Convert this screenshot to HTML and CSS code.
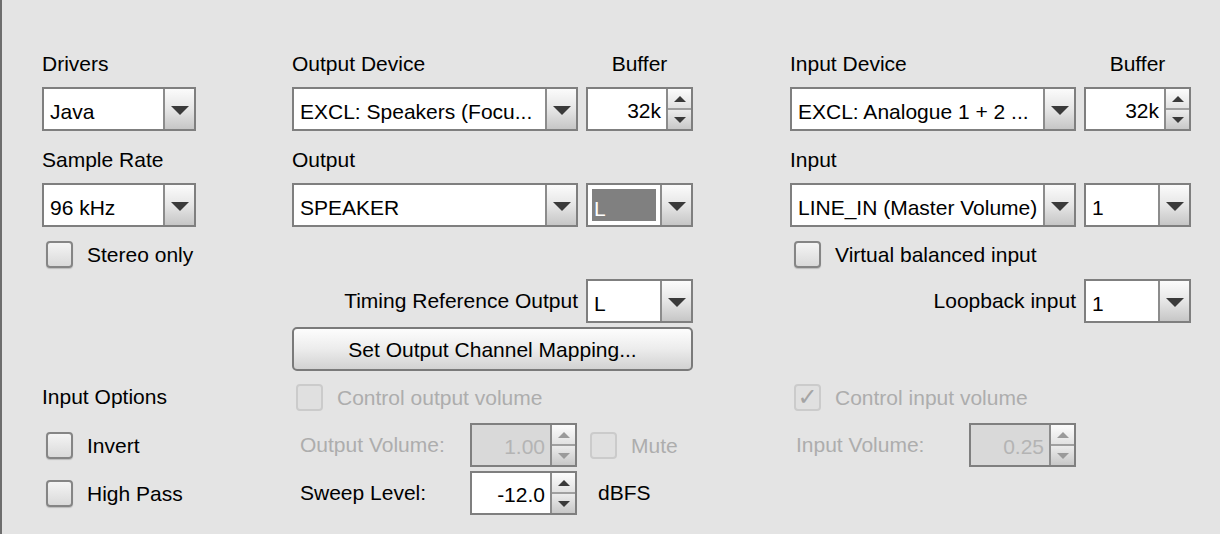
FILE: index.html
```html
<!DOCTYPE html>
<html>
<head>
    <title>Audio Device Settings</title>
    <link rel="stylesheet" href="styles.css">
</head>
<body>
<div class="panel">

    <div class="row row-label">
        <span class="ca">Drivers</span>
        <span class="cb">Output Device</span>
        <span class="cc center">Buffer</span>
        <span class="cd">Input Device</span>
        <span class="ce center">Buffer</span>
    </div>

    <div class="row row-ctrl gap-10">
        <div class="combo ca"><span class="combo-text">Java</span><span class="combo-btn"><i class="arrow-down"></i></span></div>
        <div class="combo cb"><span class="combo-text">EXCL: Speakers (Focu...</span><span class="combo-btn"><i class="arrow-down"></i></span></div>
        <div class="spinner cc"><span class="spin-text">32k</span><span class="spin-btns"><span class="spin-up"><i class="arrow-up-sm"></i></span><span class="spin-down"><i class="arrow-down-sm"></i></span></span></div>
        <div class="combo cd"><span class="combo-text">EXCL: Analogue 1 + 2 ...</span><span class="combo-btn"><i class="arrow-down"></i></span></div>
        <div class="spinner ce"><span class="spin-text">32k</span><span class="spin-btns"><span class="spin-up"><i class="arrow-up-sm"></i></span><span class="spin-down"><i class="arrow-down-sm"></i></span></span></div>
    </div>

    <div class="row row-label gap-16">
        <span class="ca">Sample Rate</span>
        <span class="cb">Output</span>
        <span class="cd">Input</span>
    </div>

    <div class="row row-ctrl gap-10">
        <div class="combo ca"><span class="combo-text">96 kHz</span><span class="combo-btn"><i class="arrow-down"></i></span></div>
        <div class="combo cb"><span class="combo-text">SPEAKER</span><span class="combo-btn"><i class="arrow-down"></i></span></div>
        <div class="combo cc"><span class="combo-text selected-wrap"><span class="selected">L</span></span><span class="combo-btn"><i class="arrow-down"></i></span></div>
        <div class="combo cd"><span class="combo-text">LINE_IN (Master Volume)</span><span class="combo-btn"><i class="arrow-down"></i></span></div>
        <div class="combo ce"><span class="combo-text">1</span><span class="combo-btn"><i class="arrow-down"></i></span></div>
    </div>

    <div class="row row-check gap-12">
        <label class="check ca"><span class="box"></span>Stereo only</label>
        <label class="check cd"><span class="box"></span>Virtual balanced input</label>
    </div>

    <div class="row row-ctrl gap-10">
        <span class="cb right">Timing Reference Output</span>
        <div class="combo cc"><span class="combo-text">L</span><span class="combo-btn"><i class="arrow-down"></i></span></div>
        <span class="cd right">Loopback input</span>
        <div class="combo ce"><span class="combo-text">1</span><span class="combo-btn"><i class="arrow-down"></i></span></div>
    </div>

    <div class="row row-ctrl gap-4">
        <button class="button cbc">Set Output Channel Mapping...</button>
    </div>

    <div class="row row-check gap-11">
        <span class="ca">Input Options</span>
        <label class="check disabled cbc"><span class="box"></span>Control output volume</label>
        <label class="check disabled cd"><span class="box"><span class="tick">&#10003;</span></span>Control input volume</label>
    </div>

    <div class="row row-ctrl gap-11">
        <label class="check ca"><span class="box"></span>Invert</label>
        <div class="group cbc">
            <span class="group-label disabled-text">Output Volume:</span>
            <div class="spinner disabled"><span class="spin-text">1.00</span><span class="spin-btns"><span class="spin-up"><i class="arrow-up-sm"></i></span><span class="spin-down"><i class="arrow-down-sm"></i></span></span></div>
            <label class="check disabled mute"><span class="box"></span>Mute</label>
        </div>
        <div class="group cd">
            <span class="group-label input-label disabled-text">Input Volume:</span>
            <div class="spinner disabled push-right"><span class="spin-text">0.25</span><span class="spin-btns"><span class="spin-up"><i class="arrow-up-sm"></i></span><span class="spin-down"><i class="arrow-down-sm"></i></span></span></div>
        </div>
    </div>

    <div class="row row-ctrl gap-4">
        <label class="check ca"><span class="box"></span>High Pass</label>
        <div class="group cbc">
            <span class="group-label">Sweep Level:</span>
            <div class="spinner"><span class="spin-text">-12.0</span><span class="spin-btns"><span class="spin-up"><i class="arrow-up-sm"></i></span><span class="spin-down"><i class="arrow-down-sm"></i></span></span></div>
            <span class="unit">dBFS</span>
        </div>
    </div>

</div>
</body>
</html>
```

FILE: styles.css
```css
*
{
	margin: 0;
	padding: 0;
	box-sizing: border-box;
}
body
{
	background: #e4e4e4;
	border-left: 2px solid #6e6e6e;
	color: #000;
	font: normal 21px "Liberation Sans", Arial, sans-serif;
	height: 534px;
	overflow: hidden;
	width: 1220px;
}
.panel
{
	display: flex;
	flex-direction: column;
	padding: 51px 0 0 40px;
}

/* every row shares the same column tracks */
.row
{
	align-items: center;
	display: grid;
	grid-template-columns: 154px 96px 286px 8px 107px 97px 286px 8px 107px;
}
.row-label { height: 26px; line-height: 26px; }
.row-ctrl { height: 44px; }
.row-check { height: 30px; }
.gap-4 { margin-top: 4px; }
.gap-10 { margin-top: 10px; }
.gap-11 { margin-top: 11px; }
.gap-12 { margin-top: 12px; }
.gap-16 { margin-top: 16px; }

.ca { grid-column: 1; }
.cb { grid-column: 3; }
.cc { grid-column: 5; }
.cd { grid-column: 7; }
.ce { grid-column: 9; }
.cbc { grid-column: 3 / 6; }
.center { text-align: center; }
.right { justify-self: end; }

/* combo box */
.combo
{
	background: #fff;
	border: 2px solid #7f7f7f;
	display: flex;
	height: 44px;
}
.combo-text
{
	flex: 1;
	overflow: hidden;
	padding: 5px 0 0 6px;
	white-space: nowrap;
	align-self: center;
}
.selected-wrap
{
	align-self: stretch;
	display: flex;
	padding: 4px;
}
.selected
{
	background: #808080;
	color: #fff;
	flex: 1;
	line-height: 36px;
	padding: 2px 0 0 2px;
}
.combo-btn
{
	align-items: center;
	background: linear-gradient(#fbfbfb, #e6e6e6 50%, #c6c6c6);
	border-left: 2px solid #8c8c8c;
	display: flex;
	justify-content: center;
	width: 31px;
}
.arrow-down
{
	border-left: 9px solid transparent;
	border-right: 9px solid transparent;
	border-top: 9px solid #3a3a3a;
	margin-top: 2px;
}

/* spinner */
.spinner
{
	background: #fff;
	border: 2px solid #7f7f7f;
	display: flex;
	height: 44px;
	width: 107px;
}
.spin-text
{
	align-self: center;
	flex: 1;
	padding: 3px 5px 0 0;
	text-align: right;
}
.spin-btns
{
	border-left: 2px solid #8c8c8c;
	display: flex;
	flex-direction: column;
	width: 25px;
}
.spin-up, .spin-down
{
	align-items: center;
	display: flex;
	flex: 1;
	justify-content: center;
}
.spin-up
{
	background: linear-gradient(#fcfcfc, #e2e2e2);
	border-bottom: 2px solid #a0a0a0;
}
.spin-down
{
	background: linear-gradient(#ececec, #c8c8c8);
}
.arrow-up-sm
{
	border-bottom: 6px solid #3a3a3a;
	border-left: 6px solid transparent;
	border-right: 6px solid transparent;
}
.arrow-down-sm
{
	border-left: 6px solid transparent;
	border-right: 6px solid transparent;
	border-top: 6px solid #3a3a3a;
}
.spinner.disabled { background: #d9d9d9; color: #b4b4b4; }
.spinner.disabled .arrow-up-sm { border-bottom-color: #9a9a9a; }
.spinner.disabled .arrow-down-sm { border-top-color: #9a9a9a; }

/* check box */
.check
{
	align-items: center;
	display: flex;
	padding: 2px 0 0 4px;
	white-space: nowrap;
}
.box
{
	align-items: center;
	background: linear-gradient(#f4f4f4, #dadada);
	border: 2px solid #858585;
	border-radius: 4px;
	box-shadow: 0 1px 1px rgba(0, 0, 0, 0.18);
	display: flex;
	height: 27px;
	justify-content: center;
	margin: -2px 14px 0 0;
	width: 27px;
}
.check.disabled { color: #adadad; }
.check.disabled .box
{
	background: #e0e0e0;
	border-color: #cbcbcb;
	box-shadow: none;
}
.tick
{
	color: #a4a4a4;
	font: bold 24px "DejaVu Sans", sans-serif;
	line-height: 1;
}
.disabled-text { color: #adadad; }

/* push button */
.button
{
	background: linear-gradient(#fdfdfd, #ececec 50%, #d2d2d2);
	border: 2px solid #7a7a7a;
	border-radius: 5px;
	color: inherit;
	font: inherit;
	height: 44px;
	padding-top: 2px;
}

/* label + spinner groups */
.group
{
	align-items: center;
	display: flex;
}
.group-label
{
	padding-left: 8px;
	width: 178px;
}
.input-label
{
	padding-left: 6px;
	width: auto;
}
.push-right { margin-left: auto; }
.mute { margin-left: 9px; }
.unit { margin-left: 21px; }
```
